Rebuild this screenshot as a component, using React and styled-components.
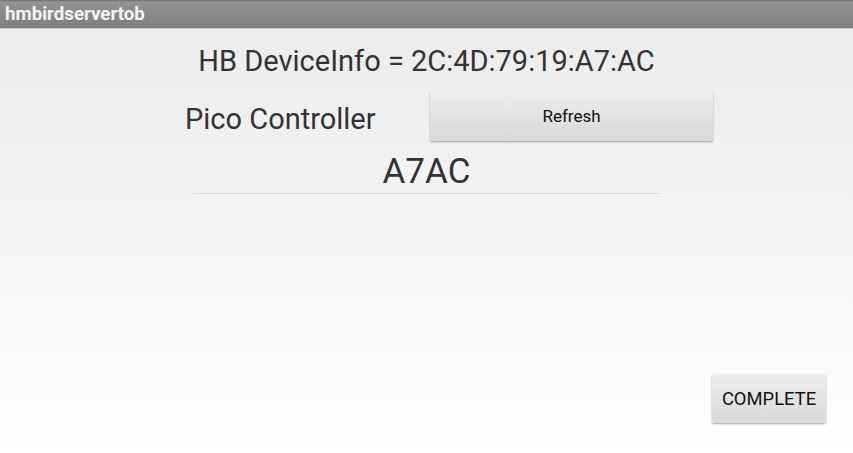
import React from 'react'
import styled, { createGlobalStyle } from 'styled-components'

const GlobalStyle = createGlobalStyle`
    html, body {
        margin: 0;
        padding: 0;
        width: 100%;
        height: 100%;
        overflow: hidden;
    }
    body {
        font-family: Roboto, "Noto Sans", sans-serif;
    }
`

const Screen = styled.div`
    width: 853px;
    height: 453px;
    display: flex;
    flex-direction: column;
    background: linear-gradient(to bottom, #ebebeb 0%, #f3f3f3 45%, #ffffff 100%);
`
const TitleBar = styled.div`
    height: 29px;
    box-sizing: border-box;
    padding-left: 5px;
    display: flex;
    align-items: center;
    background: linear-gradient(to bottom, #6e6e6e 0px, #939393 2px, #7e7e7e 100%);
    border-bottom: 1px solid #c4c4c4;
    color: #f4f4f4;
    font-size: 18.7px;
    font-weight: 700;
`
const Content = styled.div`
    flex: 1;
    display: flex;
    flex-direction: column;
    align-items: center;
`
const InfoLine = styled.div`
    margin-top: 15px;
    font-size: 29px;
    color: #333333;
    line-height: 34px;
`
const ControllerRow = styled.div`
    margin-top: 12px;
    display: flex;
    align-items: flex-start;
    width: 100%;
    padding-left: 185px;
    box-sizing: border-box;
`
const Label = styled.span`
    margin-top: 12px;
    font-size: 29px;
    line-height: 34px;
    color: #333333;
    width: 245px;
`
const Button = styled.button`
    width: ${(props) => props.width}px;
    height: ${(props) => props.height}px;
    border: none;
    border-radius: 2px;
    background: linear-gradient(to bottom, #ededed 0%, #d9d9d9 100%);
    box-shadow: 0 1px 2px rgba(0, 0, 0, 0.35);
    font-family: Roboto, "Noto Sans", sans-serif;
    font-size: ${(props) => props.size}px;
    color: #111111;
    padding: 0;
`
const Field = styled.div`
    margin-top: 10px;
    width: 467px;
    text-align: center;
    font-size: 35px;
    color: #333333;
    line-height: 41px;
    border-bottom: 1px solid #dedede;
    padding-bottom: 1px;
`
const Footer = styled.div`
    margin-top: auto;
    align-self: flex-end;
    padding: 0 27px 30px 0;
`

const App = () => {
    return (
        <>
            <GlobalStyle />
            <Screen>
                <TitleBar>hmbirdservertob</TitleBar>
                <Content>
                    <InfoLine>HB DeviceInfo = 2C:4D:79:19:A7:AC</InfoLine>
                    <ControllerRow>
                        <Label>Pico Controller</Label>
                        <Button width={283} height={51} size={17}>Refresh</Button>
                    </ControllerRow>
                    <Field>A7AC</Field>
                    <Footer>
                        <Button width={114} height={49} size={18.4}>COMPLETE</Button>
                    </Footer>
                </Content>
            </Screen>
        </>
    )
}

export default App
